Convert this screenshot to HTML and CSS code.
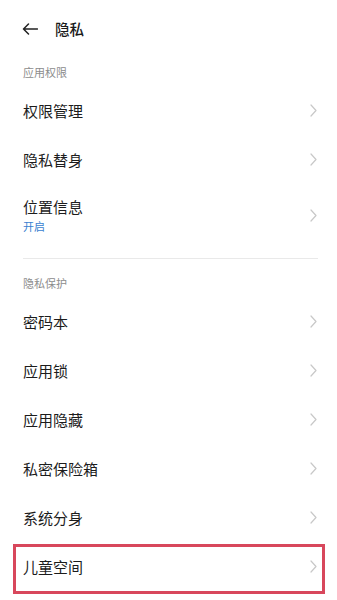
FILE: index.html
```html
<!DOCTYPE html>
<html lang="zh">
<head>
<meta charset="utf-8">
<link rel="stylesheet" href="styles.css">
</head>
<body>
<div class="page">
  <div class="topbar">
    <svg class="back" width="16" height="12" viewBox="0 0 16 12"><path d="M15.5 6H1.5M6.5 1L1.5 6L6.5 11" fill="none" stroke="#222" stroke-width="1.5" stroke-linecap="round" stroke-linejoin="round"/></svg>
    <span class="title">隐私</span>
  </div>

  <div class="section-title first">应用权限</div>
  <div class="row"><span class="label">权限管理</span><svg class="chev" width="7" height="13" viewBox="0 0 7 13"><path d="M1 1L6 6.5L1 12" fill="none" stroke="#c8c8c8" stroke-width="1.2" stroke-linecap="round" stroke-linejoin="round"/></svg></div>
  <div class="row"><span class="label">隐私替身</span><svg class="chev" width="7" height="13" viewBox="0 0 7 13"><path d="M1 1L6 6.5L1 12" fill="none" stroke="#c8c8c8" stroke-width="1.2" stroke-linecap="round" stroke-linejoin="round"/></svg></div>
  <div class="row tall">
    <div class="texts"><span class="label">位置信息</span><span class="sub">开启</span></div>
    <svg class="chev" width="7" height="13" viewBox="0 0 7 13"><path d="M1 1L6 6.5L1 12" fill="none" stroke="#c8c8c8" stroke-width="1.2" stroke-linecap="round" stroke-linejoin="round"/></svg>
  </div>

  <div class="divider"></div>

  <div class="section-title">隐私保护</div>
  <div class="row"><span class="label">密码本</span><svg class="chev" width="7" height="13" viewBox="0 0 7 13"><path d="M1 1L6 6.5L1 12" fill="none" stroke="#c8c8c8" stroke-width="1.2" stroke-linecap="round" stroke-linejoin="round"/></svg></div>
  <div class="row"><span class="label">应用锁</span><svg class="chev" width="7" height="13" viewBox="0 0 7 13"><path d="M1 1L6 6.5L1 12" fill="none" stroke="#c8c8c8" stroke-width="1.2" stroke-linecap="round" stroke-linejoin="round"/></svg></div>
  <div class="row"><span class="label">应用隐藏</span><svg class="chev" width="7" height="13" viewBox="0 0 7 13"><path d="M1 1L6 6.5L1 12" fill="none" stroke="#c8c8c8" stroke-width="1.2" stroke-linecap="round" stroke-linejoin="round"/></svg></div>
  <div class="row"><span class="label">私密保险箱</span><svg class="chev" width="7" height="13" viewBox="0 0 7 13"><path d="M1 1L6 6.5L1 12" fill="none" stroke="#c8c8c8" stroke-width="1.2" stroke-linecap="round" stroke-linejoin="round"/></svg></div>
  <div class="row"><span class="label">系统分身</span><svg class="chev" width="7" height="13" viewBox="0 0 7 13"><path d="M1 1L6 6.5L1 12" fill="none" stroke="#c8c8c8" stroke-width="1.2" stroke-linecap="round" stroke-linejoin="round"/></svg></div>
  <div class="row highlighted"><span class="label">儿童空间</span><svg class="chev" width="7" height="13" viewBox="0 0 7 13"><path d="M1 1L6 6.5L1 12" fill="none" stroke="#c8c8c8" stroke-width="1.2" stroke-linecap="round" stroke-linejoin="round"/></svg></div>
</div>
</body>
</html>
```

FILE: styles.css
```css
html, body {
  margin: 0;
  padding: 0;
  background: #ffffff;
}
body {
  font-family: "Noto Sans CJK SC", "Noto Sans", sans-serif;
  color: #1c1c1c;
  width: 337px;
  height: 600px;
  overflow: hidden;
}
.page {
  display: flex;
  flex-direction: column;
}
.topbar {
  height: 58px;
  display: flex;
  align-items: center;
  padding-left: 22px;
  gap: 17px;
}
.back {
  display: block;
}
.title {
  font-size: 14.5px;
  font-weight: 500;
  color: #1a1a1a;
  line-height: 20px;
}
.section-title {
  height: 28px;
  line-height: 28px;
  padding-left: 23px;
  font-size: 11px;
  color: #8c8c8c;
}
.row {
  height: 49px;
  display: flex;
  align-items: center;
  justify-content: space-between;
  padding-left: 23px;
  padding-right: 20px;
  box-sizing: border-box;
  position: relative;
}
.row.tall {
  height: 62px;
}
.texts {
  display: flex;
  flex-direction: column;
  gap: 1px;
}
.label {
  font-size: 15px;
  line-height: 20px;
  color: #1c1c1c;
}
.sub {
  font-size: 11px;
  line-height: 16px;
  color: #3a7fd0;
}
.chev {
  display: block;
}
.divider {
  height: 1px;
  background: #e9e9e9;
  margin: 12px 19px 10px 23px;
}
.highlighted::after {
  content: "";
  position: absolute;
  left: 13px;
  top: 2px;
  width: 312px;
  height: 50px;
  border: 3px solid #d8475c;
  box-sizing: border-box;
}
```
